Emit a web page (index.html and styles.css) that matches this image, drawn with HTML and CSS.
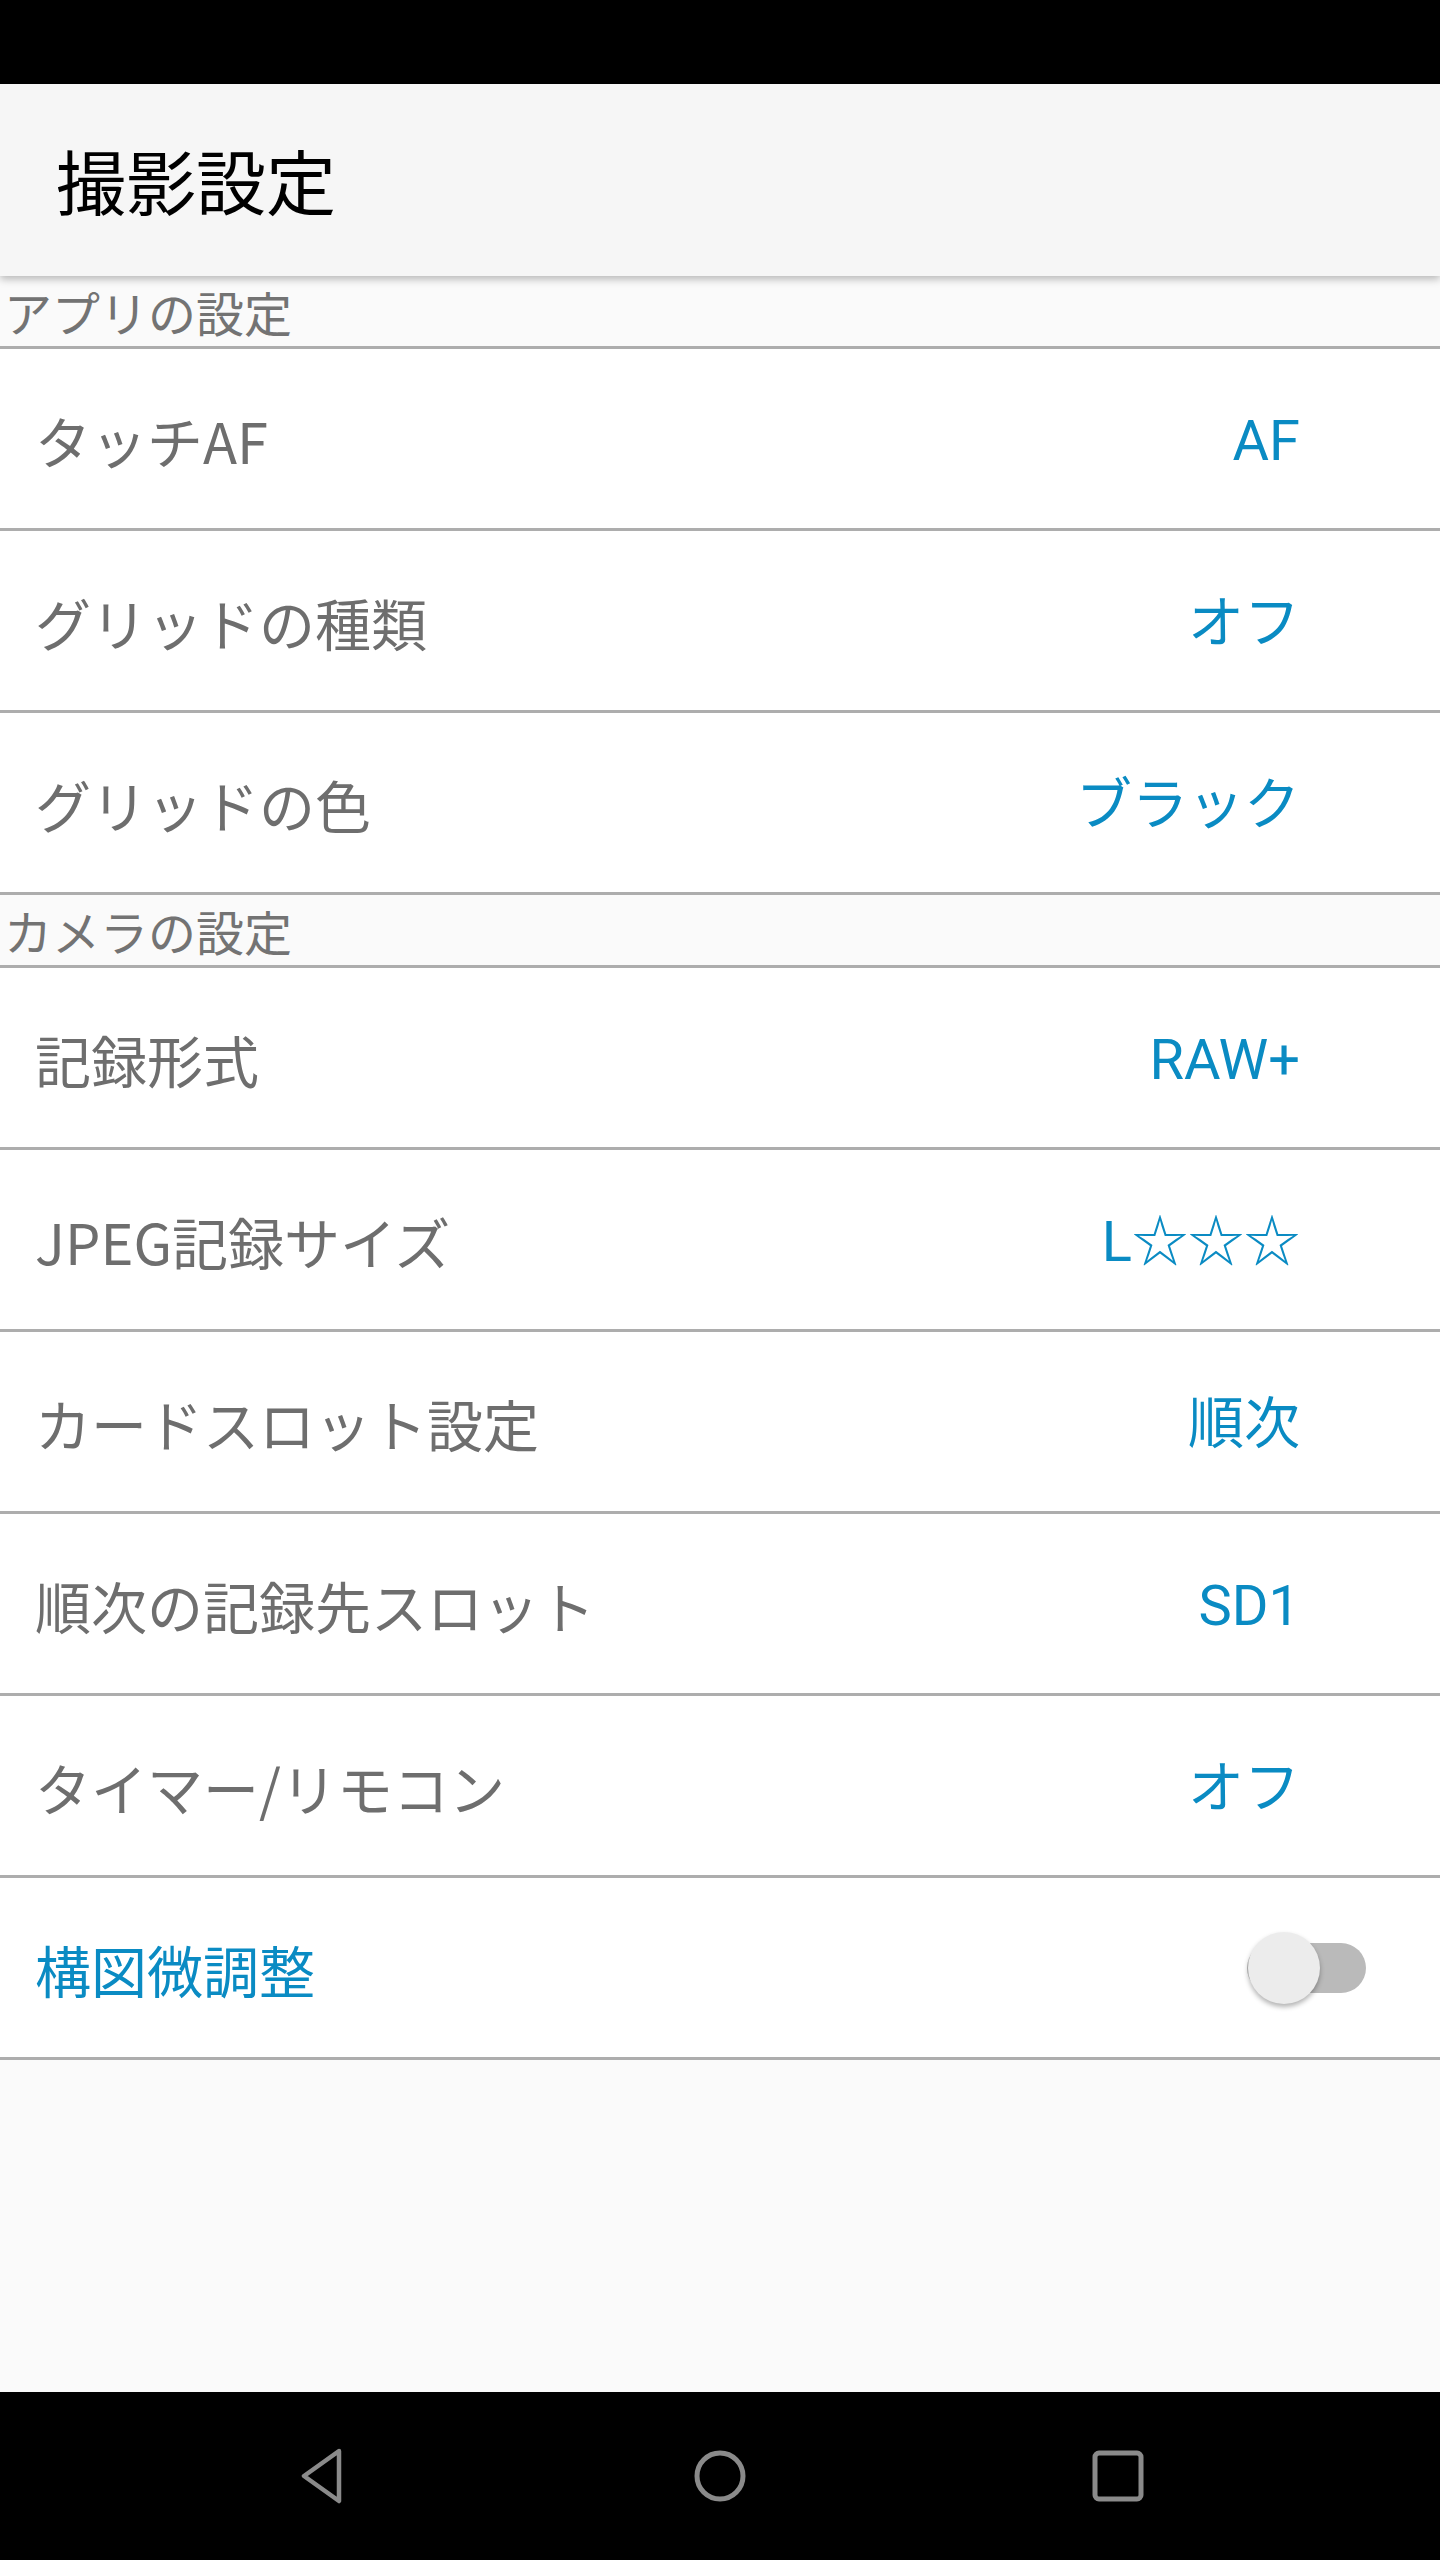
FILE: index.html
```html
<!DOCTYPE html>
<html lang="ja">
<head>
<meta charset="utf-8">
<title>撮影設定</title>
<link rel="stylesheet" href="styles.css">
</head>
<body>
<div class="screen">
  <div class="status-bar"></div>
  <header class="app-bar">
    <h1 class="title">撮影設定</h1>
  </header>

  <div class="section-header">アプリの設定</div>
  <div class="row"><span class="label">タッチAF</span><span class="value">AF</span></div>
  <div class="row"><span class="label">グリッドの種類</span><span class="value">オフ</span></div>
  <div class="row"><span class="label">グリッドの色</span><span class="value">ブラック</span></div>

  <div class="section-header">カメラの設定</div>
  <div class="row"><span class="label">記録形式</span><span class="value">RAW+</span></div>
  <div class="row"><span class="label">JPEG記録サイズ</span><span class="value">L☆☆☆</span></div>
  <div class="row"><span class="label">カードスロット設定</span><span class="value">順次</span></div>
  <div class="row"><span class="label">順次の記録先スロット</span><span class="value">SD1</span></div>
  <div class="row"><span class="label">タイマー/リモコン</span><span class="value">オフ</span></div>
  <div class="row row-toggle">
    <span class="label label-accent">構図微調整</span>
    <span class="switch"><span class="switch-track"></span><span class="switch-thumb"></span></span>
  </div>

  <div class="filler"></div>

  <nav class="nav-bar">
    <span class="nav-btn">
      <svg width="44" height="56" viewBox="0 0 44 56"><path d="M39 3 L4 28 L39 53 Z" fill="none" stroke="#8a8a8a" stroke-width="4.5" stroke-linejoin="round"/></svg>
    </span>
    <span class="nav-btn">
      <svg width="56" height="56" viewBox="0 0 56 56"><circle cx="28" cy="28" r="23" fill="none" stroke="#8a8a8a" stroke-width="5"/></svg>
    </span>
    <span class="nav-btn">
      <svg width="52" height="52" viewBox="0 0 52 52"><rect x="3" y="3" width="46" height="46" rx="4" fill="none" stroke="#8a8a8a" stroke-width="5"/></svg>
    </span>
  </nav>
</div>
</body>
</html>
```

FILE: styles.css
```css
* { box-sizing: border-box; }
html, body { margin: 0; padding: 0; }
body {
  background: #fafafa;
  font-family: "Noto Sans CJK JP", "Noto Sans", sans-serif;
}
.screen {
  width: 1440px;
  height: 2560px;
  display: flex;
  flex-direction: column;
  background: #fafafa;
}
.status-bar {
  height: 84px;
  flex: none;
  background: #000;
}
.app-bar {
  height: 192px;
  flex: none;
  background: #f6f6f6;
  display: flex;
  align-items: center;
  padding-left: 56px;
  position: relative;
  z-index: 1;
  box-shadow: 0 3px 8px rgba(0,0,0,0.28);
}
.title {
  margin: 0;
  font-weight: 400;
  font-size: 70px;
  line-height: 1;
  color: #000;
  padding-top: 0;
  white-space: nowrap;
}
.section-header {
  height: 73px;
  flex: none;
  background: #fafafa;
  border-bottom: 3px solid #adadad;
  display: flex;
  align-items: center;
  padding-left: 4px;
  font-size: 48px;
  line-height: 1;
  color: #737373;
  white-space: nowrap;
}
.row {
  height: 182px;
  flex: none;
  background: #fff;
  border-bottom: 3px solid #adadad;
  display: flex;
  align-items: center;
  justify-content: space-between;
  padding: 0 140px 0 35px;
}
.label {
  font-size: 56px;
  line-height: 1;
  color: #6e6e6e;
  padding-top: 2px;
  white-space: nowrap;
}
.label-accent { color: #0a8bc3; }
.value {
  font-family: Roboto, "Noto Sans CJK JP", sans-serif;
  font-size: 56px;
  line-height: 1;
  color: #0a8bc3;
  padding-top: 5px;
  white-space: nowrap;
}
.row-toggle { padding-right: 73px; }
.switch {
  position: relative;
  width: 120px;
  height: 72px;
  display: block;
}
.switch-track {
  position: absolute;
  left: 0;
  top: 11px;
  width: 119px;
  height: 50px;
  border-radius: 25px;
  background: #bababa;
}
.switch-thumb {
  position: absolute;
  left: 1px;
  top: 0;
  width: 72px;
  height: 72px;
  border-radius: 50%;
  background: #ececec;
  box-shadow: 0 3px 5px rgba(0,0,0,0.3);
}
.filler {
  flex: 1;
  background: #fafafa;
}
.nav-bar {
  height: 168px;
  flex: none;
  background: #000;
  display: flex;
  align-items: center;
  justify-content: center;
  gap: 318px;
}
.nav-btn {
  width: 80px;
  height: 80px;
  display: flex;
  align-items: center;
  justify-content: center;
}
```
